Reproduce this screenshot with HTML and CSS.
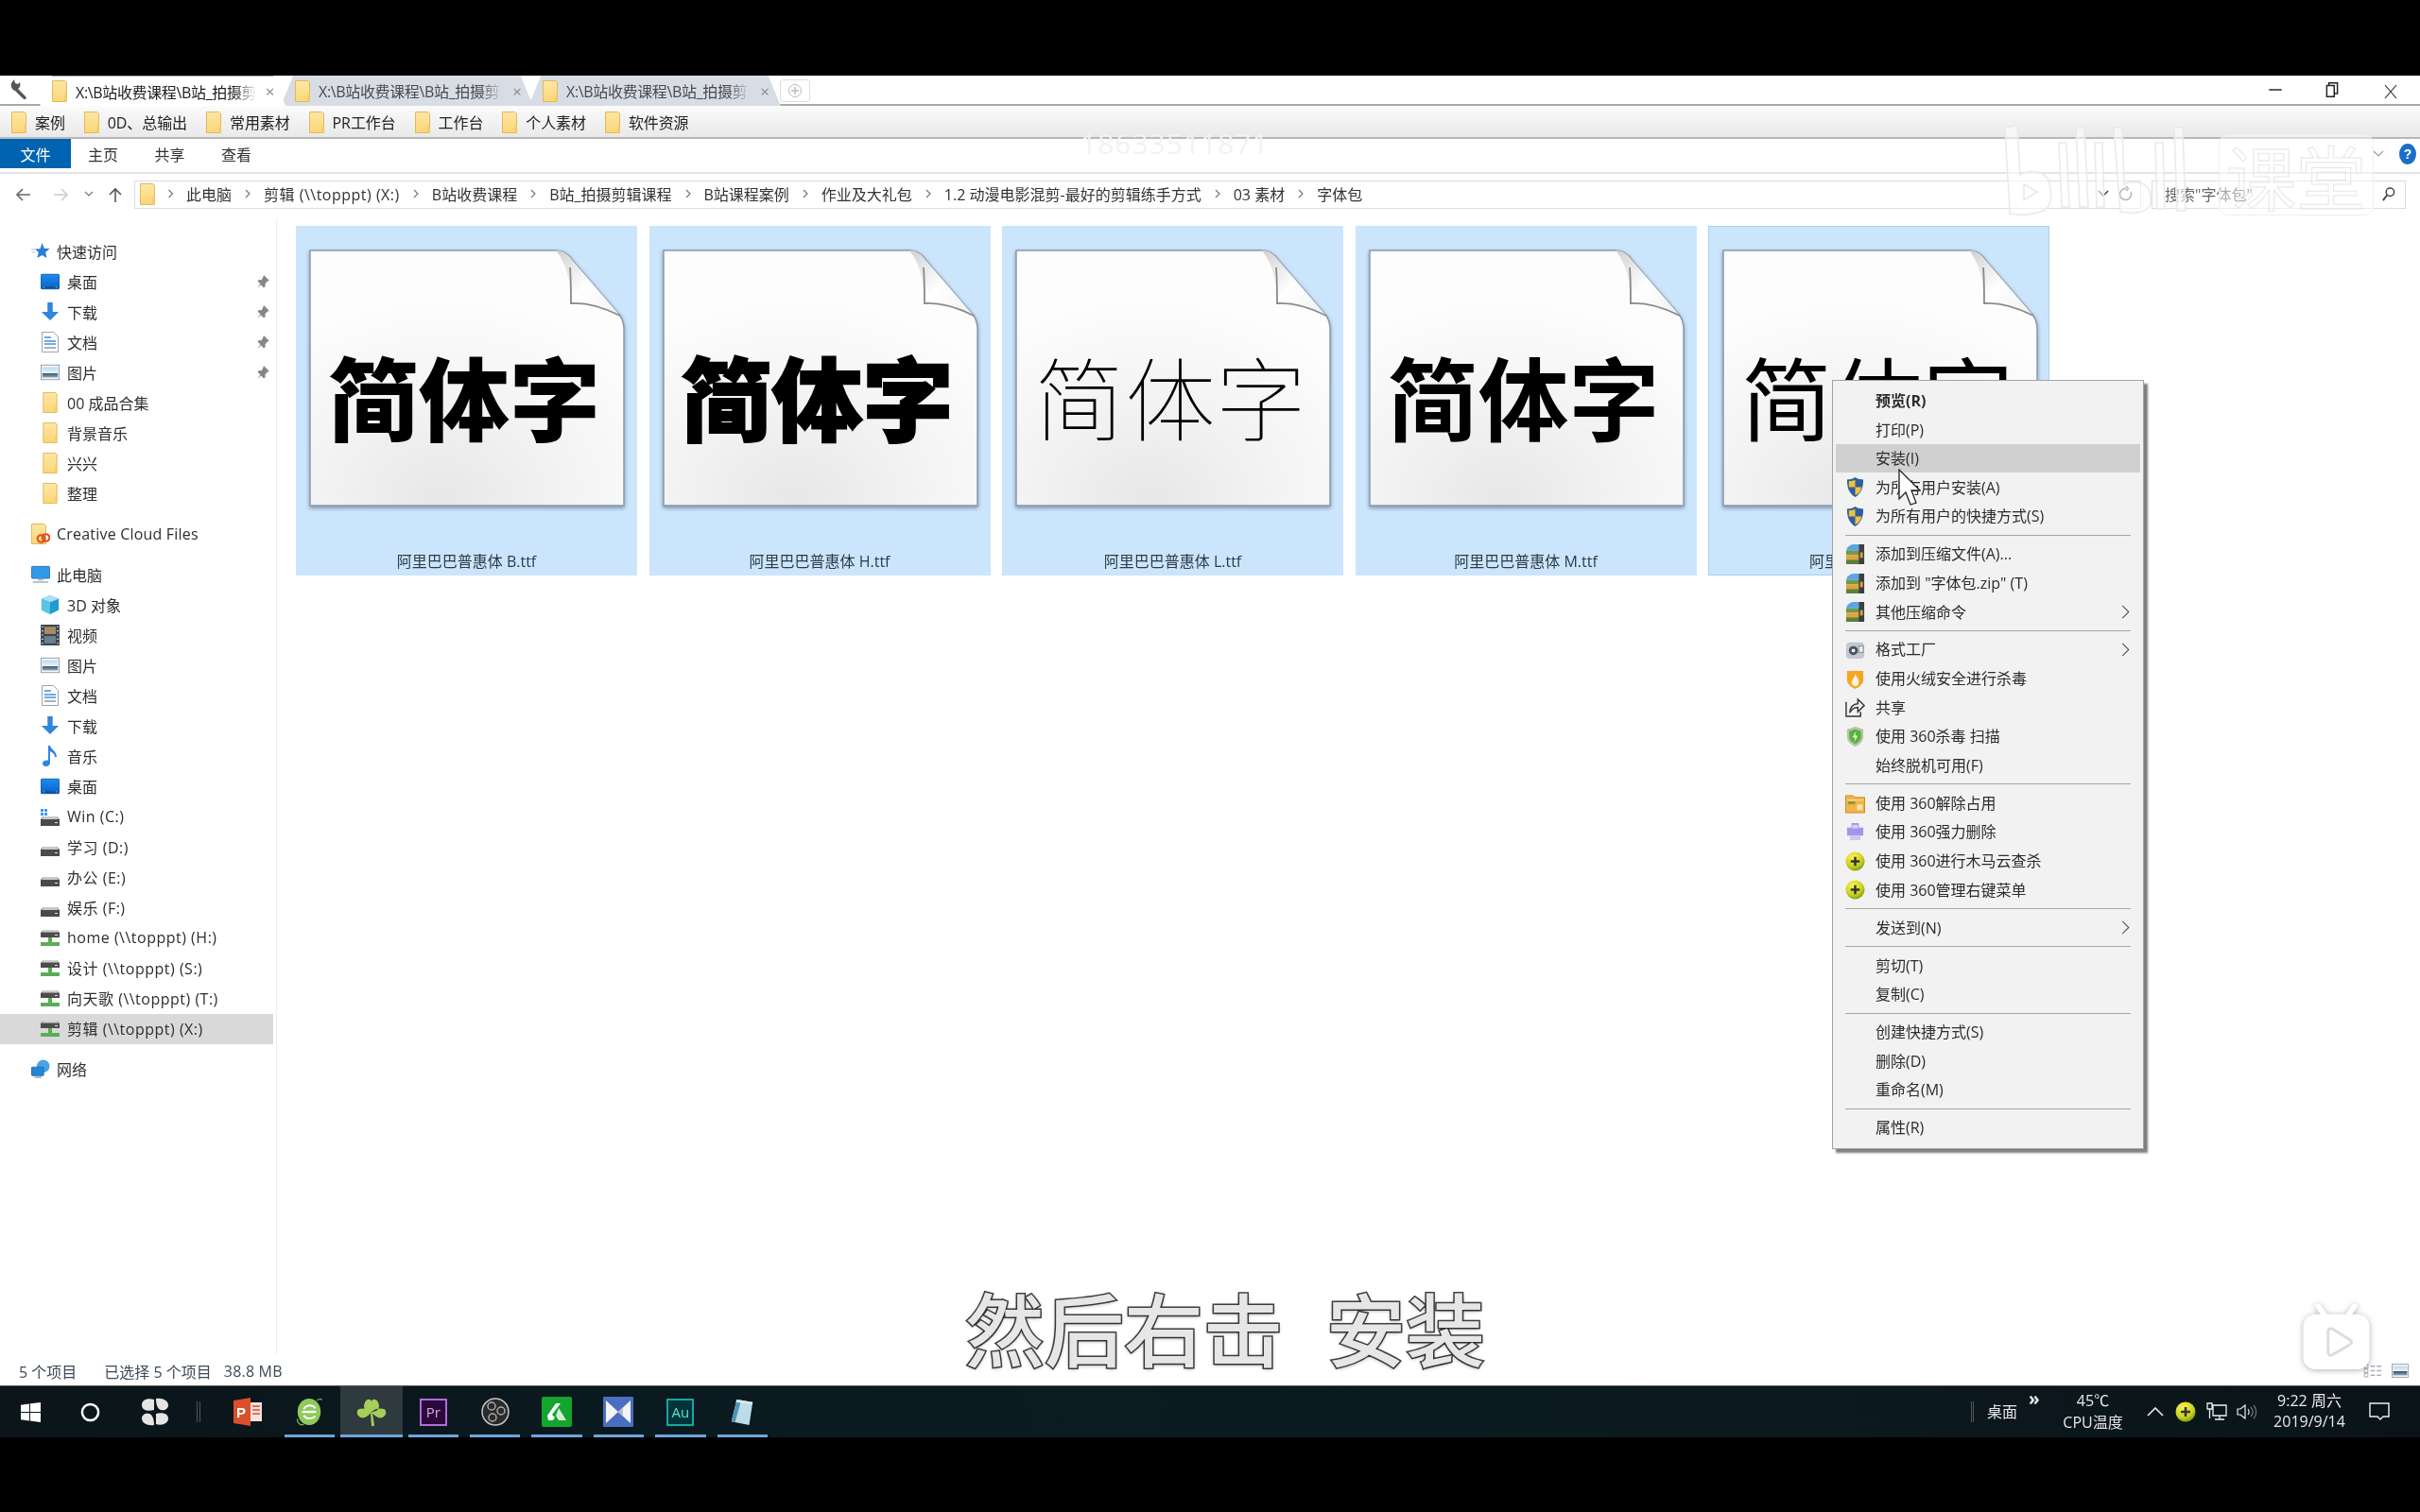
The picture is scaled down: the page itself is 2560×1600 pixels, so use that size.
FILE: index.html
```html
<!DOCTYPE html>
<html lang="zh-CN">
<head>
<meta charset="utf-8">
<title>字体包</title>
<link rel="stylesheet" href="styles.css">
</head>
<body>
<svg class="defs" width="0" height="0" aria-hidden="true">
  <defs>
    <linearGradient id="gFolder" x1="0" y1="0" x2="0" y2="1"><stop offset="0" stop-color="#fde7a6"/><stop offset="1" stop-color="#fbd676"/></linearGradient>
    <linearGradient id="gSky" x1="0" y1="0" x2="0" y2="1"><stop offset="0" stop-color="#bcd9f0"/><stop offset=".55" stop-color="#e8f2fa"/><stop offset=".6" stop-color="#3a5a70"/><stop offset="1" stop-color="#8fa6b5"/></linearGradient>
    <linearGradient id="gBlue" x1="0" y1="0" x2="0" y2="1"><stop offset="0" stop-color="#1c8cf0"/><stop offset="1" stop-color="#0a62c4"/></linearGradient>
    <linearGradient id="gFold" x1="0" y1="0" x2="1" y2="1"><stop offset="0" stop-color="#d0d0d0"/><stop offset=".5" stop-color="#fff"/><stop offset="1" stop-color="#f0f0f0"/></linearGradient>
    <radialGradient id="gPage" cx=".42" cy=".98" r=".8"><stop offset="0" stop-color="#e7e7e7"/><stop offset=".5" stop-color="#f3f3f3"/><stop offset="1" stop-color="#fdfdfd"/></radialGradient>
    <radialGradient id="g360" cx=".4" cy=".3" r=".8"><stop offset="0" stop-color="#fff35a"/><stop offset=".6" stop-color="#c9d21c"/><stop offset="1" stop-color="#5f8d12"/></radialGradient>
    <symbol id="folder" viewBox="0 0 16 23"><path d="M.5.5h13l2 1.500V22.500H.5z" fill="url(#gFolder)" stroke="#e0b95c"/><path d="M13 15h2.500v7.500H13z" fill="#f6cf6b"/></symbol>
    <symbol id="desktop" viewBox="0 0 22 18"><rect x=".5" y=".5" width="21" height="17" rx="1" fill="url(#gBlue)" stroke="#0b5cae"/><path d="M1 15h20v2H1z" fill="#0a4f96"/><path d="M3 15.500h1.500M17.500 15.500H19" stroke="#cfe4f8"/></symbol>
    <symbol id="down" viewBox="0 0 22 22"><path d="M8 0h6v11h7L11 21 1 11h7z" fill="#2f86dc"/></symbol>
    <symbol id="doc" viewBox="0 0 18 22"><path d="M.5.500h12l5 5v16H.5z" fill="#fff" stroke="#9aa6b4"/><path d="M3 6h7M3 10h12M3 13h12" stroke="#3f8fd6" stroke-width="1.500"/><path d="M3 17h12" stroke="#8a97a5" stroke-width="1.500"/></symbol>
    <symbol id="image" viewBox="0 0 22 18"><rect x=".5" y=".5" width="21" height="17" fill="#f4f6f8" stroke="#8c9aaa"/><rect x="2" y="3" width="18" height="12" fill="url(#gSky)"/></symbol>
    <symbol id="pin" viewBox="0 0 14 14"><path d="M8 0l6 6-2 .6-2.500 2.600.2 2.800L8 13.500 5.200 10.500 1 14l3.500-4.500L1.500 6.500 3 5l2.700.2L7.400 2z" fill="#868686"/></symbol>
    <symbol id="star" viewBox="0 0 20 20"><path d="M11.500 1l2.300 5.800 5.700.4-4.400 3.800 1.500 6L11.500 14l-5.200 3 1.500-6-3.800-3.400 5.500-.4z" fill="#2a7fd8"/><path d="M0 8h4M1 11h3" stroke="#9ac7ef"/></symbol>
    <symbol id="cc" viewBox="0 0 20 22"><path d="M.5.500h13l2 2V21.500H.5z" fill="url(#gFolder)" stroke="#e0b95c"/><circle cx="10.500" cy="16" r="3.800" fill="none" stroke="#e34b1e" stroke-width="2"/><circle cx="15.500" cy="15" r="3.800" fill="none" stroke="#e34b1e" stroke-width="2"/></symbol>
    <symbol id="pc" viewBox="0 0 22 20"><rect x=".5" y=".5" width="21" height="14" rx="1" fill="#2f9ae8" stroke="#3d6f9c"/><path d="M8 15h6v2H8zM2 18h18v1.500H2z" fill="#9fb2c4"/></symbol>
    <symbol id="cube" viewBox="0 0 22 22"><path d="M11 0l10 4v13l-10 5-10-5V4z" fill="#1e9bd1"/><path d="M1 4l10 4 10-4-10-4z" fill="#a7e2f3"/><path d="M1 4l10 4v14L1 17z" fill="#5bc4e2"/></symbol>
    <symbol id="film" viewBox="0 0 18 20"><rect width="18" height="20" fill="#3a4552"/><rect x="3.500" y="2" width="11" height="7" fill="#a98b60"/><rect x="3.500" y="11" width="11" height="7" fill="#6e7f8e"/><path d="M1 2h1.500M1 6h1.500M1 10h1.500M1 14h1.500M1 18h1.500M15.500 2H17M15.500 6H17M15.500 10H17M15.500 14H17M15.500 18H17" stroke="#dfe5ea"/></symbol>
    <symbol id="music" viewBox="0 0 16 22"><path d="M6 0h2c1 4 7 6 7 12h-2c0-3-3-5-5-6v12c0 2.500-2 4-4.500 4S0 20.500 0 18.500 2.500 15 6 15.500z" fill="#2f86dc"/></symbol>
    <symbol id="hdd" viewBox="0 -11 20 22"><path d="M3 0h14l3 3v7H0V3z" fill="#4a4a4a"/><path d="M3 0h14l2 3H1z" fill="#c8c8c8"/><path d="M15 6.500h3" stroke="#e8e8e8"/></symbol>
    <symbol id="hddwin" viewBox="0 -11 20 22"><path d="M3 0h14l3 3v7H0V3z" fill="#4a4a4a"/><path d="M3 0h14l2 3H1z" fill="#c8c8c8"/><path d="M15 6.500h3" stroke="#e8e8e8"/><path d="M0-8h3v3H0zM4-8h3v3H4zM0-4h3v3H0zM4-4h3v3H4z" fill="#3b9be6"/></symbol>
    <symbol id="netd" viewBox="0 -3 20 22"><path d="M3 0h14l3 3v5H0V3z" fill="#4d4d4d"/><path d="M3 0h14l2 2.500H1z" fill="#d0d0d0"/><path d="M15 5.500h3" stroke="#e8e8e8"/><path d="M8 8h4v5h8v4H0v-4h8z" fill="#5aad58"/></symbol>
    <symbol id="net" viewBox="0 0 22 22"><circle cx="14" cy="8" r="7.500" fill="#4aa3e6"/><rect x=".5" y="9" width="14" height="10" rx="1" fill="#2486d6" stroke="#1d6eb0"/><path d="M4 21h8" stroke="#8fa6b5" stroke-width="1.500"/></symbol>
    <symbol id="uac" viewBox="0 0 20 22"><path d="M10 0c3 2 6 2.500 9 2.500 0 9-2 15-9 19.500C3 17.500 1 11.500 1 2.500 4 2.500 7 2 10 0z" fill="#2d5f9e"/><path d="M10 3v8h7c-.3 3-1.500 6.500-7 9zM10 11H3.200C3 9 3 7 3 4.500c2.500 0 5-.5 7-1.500z" fill="#f0c23c"/></symbol>
    <symbol id="rar" viewBox="0 0 22 22"><path d="M1 7c1-5 6-7 9-7h5v7z" fill="#5aa6e4"/><rect x="1" y="7" width="20" height="5" fill="#6f9a4c"/><rect x="1" y="12" width="20" height="5" fill="#e5a23b"/><rect x="1" y="17" width="20" height="5" fill="#5f7f3a"/><rect x="15" width="6" height="22" fill="#3d3f43"/><rect x="16.500" y="9" width="3" height="6" fill="#d8a33a"/></symbol>
    <symbol id="ff" viewBox="0 0 22 22"><rect x="1" y="3" width="20" height="18" rx="4" fill="#c2c8d0"/><circle cx="9" cy="12" r="5" fill="#4b5360"/><circle cx="9" cy="12" r="2" fill="#eef1f4"/><rect x="15" y="7" width="5" height="7" fill="#edf0f3" stroke="#7f8894"/></symbol>
    <symbol id="hr" viewBox="0 0 20 22"><path d="M1 2h18v10c0 5-5 8-9 10-4-2-9-5-9-10z" fill="#f5a623"/><path d="M10 5c1 4 4 5 4 9s-2 5-4 5-4-2-4-4c0-3 3-4 4-10z" fill="#fdf3df"/></symbol>
    <symbol id="share" viewBox="0 0 22 22"><path d="M1 5v16h16v-5" fill="none" stroke="#333" stroke-width="1.500"/><path d="M5 17c0-6 4-10 9-10V2l7 7-7 7v-5c-4 0-7 2-9 6z" fill="#f2f2f2" stroke="#333" stroke-width="1.500"/></symbol>
    <symbol id="sh360" viewBox="0 0 20 22"><path d="M1 3 10 0l9 3v8c0 5-4 9-9 11-5-2-9-6-9-11z" fill="#b8c2a8"/><path d="M3.500 5 10 3l6.500 2v6c0 3.500-3 6.500-6.500 8-3.500-1.500-6.500-4.500-6.500-8z" fill="#55b33a"/><path d="M11 5 7 12h3l-1 5 4-7h-3z" fill="#eaf7d4"/></symbol>
    <symbol id="unlock" viewBox="0 0 22 22"><path d="M.5 2h8l2 2h11v17H.5z" fill="#f2b347" stroke="#c98a25"/><path d="M2 7h18" stroke="#fde4ae"/><path d="M3 10h8" stroke="#8b9a3c" stroke-width="3"/><rect x="13" y="12" width="6" height="6" fill="#fde4ae"/></symbol>
    <symbol id="force" viewBox="0 0 22 22"><path d="M7 1h8v5h5v9H2V6h5z" fill="#a694ec"/><rect x="5" y="15" width="12" height="5" fill="#cfc6f7"/><rect x="8" y="3" width="6" height="4" fill="#d7cff9"/></symbol>
    <symbol id="s360" viewBox="0 0 22 22"><circle cx="11" cy="11" r="10.500" fill="url(#g360)"/><path d="M11 6v10M6 11h10" stroke="#333" stroke-width="2.600"/></symbol>
    <symbol id="chev" viewBox="0 0 10 18"><path d="M1 1l8 8-8 8" fill="none" stroke="#555" stroke-width="1.300"/></symbol>
    <symbol id="crumb" viewBox="0 0 6 10"><path d="M1 1l4 4-4 4" fill="none" stroke="#777" stroke-width="1.200"/></symbol>
    <symbol id="page" viewBox="0 0 336 276">
      <path d="M2 2H262c8 0 13 3 18 11l50 58c3 5 4 8 4 14V272H2z" fill="url(#gPage)" stroke="#8d99a8" stroke-width="1.500"/>
      <path d="M262 2c6 0 12 3 17 10l51 59c-16-8-38-14-52-13-1-18-2-38-16-56z" fill="url(#gFold)"/>
      <path d="M277 20c1 14 1 26 1 38 16-1 36 5 52 13" fill="none" stroke="#8a8a8a" stroke-width="1.800"/>
    </symbol>
  </defs>
</svg>

<div class="screen">
  <div class="window">
    <header class="tabbar">
      <svg class="wrench" viewBox="0 0 18 22"><path d="M1 5l3-4 1 4 3 1 2-2c1 3 0 6-2 7l8 8c1 1 1 3 0 3s-2 0-3-1L5 13C2 12 0 9 1 5z" fill="#555"/></svg>
      <div class="tab tab-on"><svg class="fld"><use href="#folder"/></svg><span class="tab-text">X:\B站收费课程\B站_拍摄剪</span><span class="tab-x">×</span></div>
      <div class="tab"><svg class="fld"><use href="#folder"/></svg><span class="tab-text">X:\B站收费课程\B站_拍摄剪</span><span class="tab-x">×</span></div>
      <div class="tab"><svg class="fld"><use href="#folder"/></svg><span class="tab-text">X:\B站收费课程\B站_拍摄剪</span><span class="tab-x">×</span></div>
      <div class="newtab"><svg viewBox="0 0 16 16"><circle cx="8" cy="8" r="6.500" fill="none" stroke="#bbb"/><path d="M8 4v8M4 8h8" stroke="#bbb" stroke-width="1.500"/></svg></div>
      <div class="winctl">
        <svg class="ctl" viewBox="0 0 16 16"><path d="M2 8h12" stroke="#222" stroke-width="1.300"/></svg>
        <svg class="ctl" viewBox="0 0 16 16"><path d="M5 4V1.500h8v10h-3M3 4h7v10.500H3z" fill="none" stroke="#222" stroke-width="1.300"/></svg>
        <svg class="ctl ctl-x" viewBox="0 0 16 16"><path d="M2 1l12 14M14 1L2 15" stroke="#222" stroke-width="1.100"/></svg>
      </div>
    </header>

    <nav class="bookmarks">
      <a class="bm"><svg class="fld"><use href="#folder"/></svg>案例</a>
      <a class="bm"><svg class="fld"><use href="#folder"/></svg>0D、总输出</a>
      <a class="bm"><svg class="fld"><use href="#folder"/></svg>常用素材</a>
      <a class="bm"><svg class="fld"><use href="#folder"/></svg>PR工作台</a>
      <a class="bm"><svg class="fld"><use href="#folder"/></svg>工作台</a>
      <a class="bm"><svg class="fld"><use href="#folder"/></svg>个人素材</a>
      <a class="bm"><svg class="fld"><use href="#folder"/></svg>软件资源</a>
    </nav>

    <div class="ribbon">
      <span class="rib-file">文件</span>
      <span class="rib-tab">主页</span>
      <span class="rib-tab">共享</span>
      <span class="rib-tab">查看</span>
      <svg class="rib-chev" viewBox="0 0 12 8"><path d="M1 1l5 5 5-5" fill="none" stroke="#999" stroke-width="1.200"/></svg>
      <span class="rib-help">?</span>
    </div>

    <div class="addr-row">
      <svg class="nav nav-back" viewBox="0 0 18 18"><path d="M17 9H3M9 3L3 9l6 6" fill="none" stroke="#666" stroke-width="1.600"/></svg>
      <svg class="nav nav-fwd" viewBox="0 0 18 18"><path d="M1 9h14M9 3l6 6-6 6" fill="none" stroke="#ccc" stroke-width="1.600"/></svg>
      <svg class="nav nav-drop" viewBox="0 0 10 8"><path d="M1 1l4 4 4-4" fill="none" stroke="#777" stroke-width="1.200"/></svg>
      <svg class="nav nav-up" viewBox="0 0 18 18"><path d="M9 17V3M3 9l6-6 6 6" fill="none" stroke="#555" stroke-width="1.600"/></svg>
      <div class="addr">
        <svg class="fld"><use href="#folder"/></svg>
        <svg class="crumb-sep first"><use href="#crumb"/></svg>
        <span>此电脑</span><svg class="crumb-sep"><use href="#crumb"/></svg>
        <span class="spaced">剪辑 (\\topppt) (X:)</span><svg class="crumb-sep"><use href="#crumb"/></svg>
        <span>B站收费课程</span><svg class="crumb-sep"><use href="#crumb"/></svg>
        <span>B站_拍摄剪辑课程</span><svg class="crumb-sep"><use href="#crumb"/></svg>
        <span>B站课程案例</span><svg class="crumb-sep"><use href="#crumb"/></svg>
        <span>作业及大礼包</span><svg class="crumb-sep"><use href="#crumb"/></svg>
        <span>1.2 动漫电影混剪-最好的剪辑练手方式</span><svg class="crumb-sep"><use href="#crumb"/></svg>
        <span>03 素材</span><svg class="crumb-sep"><use href="#crumb"/></svg>
        <span>字体包</span>
        <svg class="addr-drop" viewBox="0 0 12 8"><path d="M1 1l5 5 5-5" fill="none" stroke="#444" stroke-width="1.600"/></svg>
        <svg class="addr-ref" viewBox="0 0 16 18"><path d="M13 7a6 6 0 1 1-5-3.500M8 1l2.500 2.500L8 6" fill="none" stroke="#555" stroke-width="1.400"/></svg>
      </div>
      <div class="search">
        <span>搜索"字体包"</span>
        <svg class="search-ico" viewBox="0 0 16 18"><circle cx="10" cy="6.500" r="4.500" fill="none" stroke="#444" stroke-width="1.600"/><path d="M6.500 10L2 16" stroke="#444" stroke-width="2"/></svg>
      </div>
    </div>

    <main class="main">
      <aside class="side">
        <div class="row head"><svg class="ic"><use href="#star"/></svg>快速访问</div>
        <div class="row"><svg class="ic"><use href="#desktop"/></svg>桌面<svg class="pin"><use href="#pin"/></svg></div>
        <div class="row"><svg class="ic"><use href="#down"/></svg>下载<svg class="pin"><use href="#pin"/></svg></div>
        <div class="row"><svg class="ic"><use href="#doc"/></svg>文档<svg class="pin"><use href="#pin"/></svg></div>
        <div class="row"><svg class="ic"><use href="#image"/></svg>图片<svg class="pin"><use href="#pin"/></svg></div>
        <div class="row"><svg class="ic"><use href="#folder"/></svg>00 成品合集</div>
        <div class="row"><svg class="ic"><use href="#folder"/></svg>背景音乐</div>
        <div class="row"><svg class="ic"><use href="#folder"/></svg>兴兴</div>
        <div class="row"><svg class="ic"><use href="#folder"/></svg>整理</div>
        <div class="row head gap"><svg class="ic"><use href="#cc"/></svg><span class="latin">Creative Cloud Files</span></div>
        <div class="row head gap"><svg class="ic"><use href="#pc"/></svg>此电脑</div>
        <div class="row"><svg class="ic"><use href="#cube"/></svg>3D 对象</div>
        <div class="row"><svg class="ic"><use href="#film"/></svg>视频</div>
        <div class="row"><svg class="ic"><use href="#image"/></svg>图片</div>
        <div class="row"><svg class="ic"><use href="#doc"/></svg>文档</div>
        <div class="row"><svg class="ic"><use href="#down"/></svg>下载</div>
        <div class="row"><svg class="ic"><use href="#music"/></svg>音乐</div>
        <div class="row"><svg class="ic"><use href="#desktop"/></svg>桌面</div>
        <div class="row"><svg class="ic"><use href="#hddwin"/></svg><span class="spaced">Win (C:)</span></div>
        <div class="row"><svg class="ic"><use href="#hdd"/></svg><span class="spaced">学习 (D:)</span></div>
        <div class="row"><svg class="ic"><use href="#hdd"/></svg><span class="spaced">办公 (E:)</span></div>
        <div class="row"><svg class="ic"><use href="#hdd"/></svg><span class="spaced">娱乐 (F:)</span></div>
        <div class="row"><svg class="ic"><use href="#netd"/></svg><span class="spaced">home (\\topppt) (H:)</span></div>
        <div class="row"><svg class="ic"><use href="#netd"/></svg><span class="spaced">设计 (\\topppt) (S:)</span></div>
        <div class="row"><svg class="ic"><use href="#netd"/></svg><span class="spaced">向天歌 (\\topppt) (T:)</span></div>
        <div class="row sel"><svg class="ic"><use href="#netd"/></svg><span class="spaced">剪辑 (\\topppt) (X:)</span></div>
        <div class="row head gap"><svg class="ic"><use href="#net"/></svg>网络</div>
      </aside>
      <section class="files">
        <figure class="tile">
          <div class="thumb"><svg class="page"><use href="#page"/></svg><span class="glyphs g-b">简体字</span></div>
          <figcaption>阿里巴巴普惠体 B.ttf</figcaption>
        </figure>
        <figure class="tile">
          <div class="thumb"><svg class="page"><use href="#page"/></svg><span class="glyphs g-h">简体字</span></div>
          <figcaption>阿里巴巴普惠体 H.ttf</figcaption>
        </figure>
        <figure class="tile">
          <div class="thumb"><svg class="page"><use href="#page"/></svg><span class="glyphs g-l">简体字</span></div>
          <figcaption>阿里巴巴普惠体 L.ttf</figcaption>
        </figure>
        <figure class="tile">
          <div class="thumb"><svg class="page"><use href="#page"/></svg><span class="glyphs g-m">简体字</span></div>
          <figcaption>阿里巴巴普惠体 M.ttf</figcaption>
        </figure>
        <figure class="tile tile-focus">
          <div class="thumb"><svg class="page"><use href="#page"/></svg><span class="glyphs g-r">简体字</span></div>
          <figcaption>阿里巴巴普惠体 R.ttf</figcaption>
        </figure>
      </section>
    </main>

    <footer class="status">
      <span class="st-count">5 个项目</span>
      <span class="st-sel">已选择 5 个项目</span>
      <span class="st-size">38.8 MB</span>
      <svg class="view" viewBox="0 0 22 16"><path d="M1 1h4v4H1zM1 6h4v4H1zM1 11h4v4H1z" fill="none" stroke="#9aa"/><path d="M8 3h5M15 3h5M8 8h5M15 8h5M8 13h5M15 13h5" stroke="#aab" stroke-width="1.500"/></svg>
      <svg class="view view-img"><use href="#image"/></svg>
    </footer>

    <!-- overlays -->
    <div class="wm-num">18633511871</div>
    <svg class="wm-bili" viewBox="0 0 205 95">
      <path d="M1 2l13-2 3 52c10-6 26-4 30 6 4 12 4 26-4 31-10 6-27 6-37 4zM21 62l14 8-14 9z" fill="rgba(255,255,255,.55)" stroke="#e9e9e9" stroke-width="1.500"/>
      <path d="M58 18h8l3 68h-8zM76 2h9l4 84h-9zM96 18h8l2 68h-8zM116 2h9l2 60c8-4 22-3 26 5 4 10 3 18-3 22-8 4-18 4-27 2zM160 18h8l2 70h-8zM180 2h9l3 88h-9z" fill="rgba(255,255,255,.55)" stroke="#e9e9e9" stroke-width="1.500"/>
    </svg>
    <div class="wm-box">课堂</div>

    <div class="menu">
      <div class="mi mi-bold">预览(R)</div>
      <div class="mi">打印(P)</div>
      <div class="mi mi-hover">安装(I)</div>
      <div class="mi"><svg class="mic"><use href="#uac"/></svg>为所有用户安装(A)</div>
      <div class="mi"><svg class="mic"><use href="#uac"/></svg>为所有用户的快捷方式(S)</div>
      <hr class="msep">
      <div class="mi"><svg class="mic"><use href="#rar"/></svg>添加到压缩文件(A)...</div>
      <div class="mi"><svg class="mic"><use href="#rar"/></svg>添加到 "字体包.zip" (T)</div>
      <div class="mi"><svg class="mic"><use href="#rar"/></svg>其他压缩命令<svg class="msub"><use href="#chev"/></svg></div>
      <hr class="msep">
      <div class="mi"><svg class="mic"><use href="#ff"/></svg>格式工厂<svg class="msub"><use href="#chev"/></svg></div>
      <div class="mi"><svg class="mic"><use href="#hr"/></svg>使用火绒安全进行杀毒</div>
      <div class="mi"><svg class="mic"><use href="#share"/></svg>共享</div>
      <div class="mi"><svg class="mic"><use href="#sh360"/></svg>使用 360杀毒 扫描</div>
      <div class="mi">始终脱机可用(F)</div>
      <hr class="msep">
      <div class="mi"><svg class="mic"><use href="#unlock"/></svg>使用 360解除占用</div>
      <div class="mi"><svg class="mic"><use href="#force"/></svg>使用 360强力删除</div>
      <div class="mi"><svg class="mic"><use href="#s360"/></svg>使用 360进行木马云查杀</div>
      <div class="mi"><svg class="mic"><use href="#s360"/></svg>使用 360管理右键菜单</div>
      <hr class="msep">
      <div class="mi">发送到(N)<svg class="msub"><use href="#chev"/></svg></div>
      <hr class="msep">
      <div class="mi">剪切(T)</div>
      <div class="mi">复制(C)</div>
      <hr class="msep">
      <div class="mi">创建快捷方式(S)</div>
      <div class="mi">删除(D)</div>
      <div class="mi">重命名(M)</div>
      <hr class="msep">
      <div class="mi">属性(R)</div>
    </div>
    <svg class="cursor" viewBox="0 0 24 40"><path d="M1 1v31l7-7 5 13 6-2-5-13h9z" fill="#fff" stroke="#222" stroke-width="1.300"/></svg>

    <div class="subtitle"><span>然后右击</span><span>安装</span></div>
    <svg class="tvlogo" viewBox="0 0 74 72"><path d="M24 12 17 2M50 12l7-10" stroke="#fff" stroke-width="6" stroke-linecap="round"/><rect x="1" y="11" width="72" height="60" rx="13" fill="#fff"/><path d="M28 30c0-3 2-4 5-3l19 12c2 1 2 4 0 5L33 55c-3 2-5 0-5-3z" fill="none" stroke="#dcdcdc" stroke-width="3"/></svg>
  </div>

  <div class="taskbar">
    <div class="tb-cell c-win"><svg class="t-win" viewBox="0 0 22 22"><path d="M0 3l9.500-1.500V10.500H0zM10.500 1.300 22 0v10.500H10.500zM0 11.500h9.500v9L0 19zM10.500 11.500H22V22l-11.500-1.500z" fill="#fff"/></svg></div>
    <div class="tb-cell c-cor"><svg class="t-ico20" viewBox="0 0 22 22"><circle cx="11" cy="11" r="9" fill="none" stroke="#fff" stroke-width="2.600"/></svg></div>
    <div class="tb-cell c-swirl"><svg class="t-ico30" viewBox="0 0 30 30"><path d="M14 2C6 0 1 3 1 8s6 7 13 5zM16 1c7-1 13 2 13 7 0 4-4 6-8 5-3-1-5-5-5-12zM14 29c-7 1-13-2-13-7 0-4 4-6 8-5 3 1 5 5 5 12zM16 28c7 2 13-1 13-6s-6-7-13-5z" fill="#e4e4e4"/></svg></div>
    <div class="tb-sep"></div>
    <div class="tb-cell app"><svg class="t-ico30" viewBox="0 0 30 30"><path d="M0 3l18-3v30L0 27z" fill="#d9502b"/><rect x="18" y="5" width="12" height="20" fill="#f3e3dc"/><path d="M20 9h8M20 13h8M20 17h8" stroke="#d9502b" stroke-width="1.500"/><text x="3" y="21" class="t-p">P</text></svg></div>
    <div class="tb-cell app run"><svg class="t-ico30" viewBox="0 0 30 32"><ellipse cx="15" cy="16" rx="13" ry="15" fill="#8fca5a"/><path d="M7 16h16" stroke="#fff" stroke-width="2.500"/><path d="M22 12c-2-4-10-5-13 1M9 20c2 4 9 5 13 1" fill="none" stroke="#fff" stroke-width="2"/><path d="M2 24C1 28 5 32 9 30M24 3c3-2 5-2 5 0" fill="none" stroke="#6db33f" stroke-width="1.500"/></svg></div>
    <div class="tb-cell app active run"><svg class="t-ico32" viewBox="0 0 32 32"><path d="M16 16C10 16 6 12 9 6c2-4 6-4 7-1 1-3 5-3 7 1 3 6-1 10-7 10zM16 16c-4 6-10 8-13 5-3-2-3-7 0-8 3-1 9-1 13 3zM16 16c4 6 10 8 13 5 3-2 3-7 0-8-3-1-9-1-13 3zM15 17h2l2 14h-3z" fill="#a6cf5a"/></svg></div>
    <div class="tb-cell app run"><div class="t-box t-pr">Pr</div></div>
    <div class="tb-cell app run"><svg class="t-ico30" viewBox="0 0 30 30"><circle cx="15" cy="15" r="14" fill="#2b2a2d" stroke="#c4c4c4" stroke-width="1.500"/><circle cx="11" cy="9" r="4" fill="none" stroke="#aaa" stroke-width="1.500"/><circle cx="21" cy="14" r="4" fill="none" stroke="#aaa" stroke-width="1.500"/><circle cx="12" cy="21" r="4" fill="none" stroke="#aaa" stroke-width="1.500"/></svg></div>
    <div class="tb-cell app run"><svg class="t-ico32" viewBox="0 0 32 32"><rect width="32" height="32" rx="2" fill="#14a52e"/><path d="M15 7h5l-9 12 3 3-2 3H7l-1-5z" fill="#fff"/><path d="M18 12l8 13h-8l-3-5z" fill="#d5efd9"/></svg></div>
    <div class="tb-cell app run"><svg class="t-ico32" viewBox="0 0 32 32"><rect width="32" height="32" rx="1" fill="#4a6fc0"/><path d="M3 4l13 12L3 28zM29 4 16 16l13 12z" fill="#f4f4f4"/><path d="M21 11l-5 5 5 5z" fill="#b8c0d0"/></svg></div>
    <div class="tb-cell app run"><div class="t-box t-au">Au</div></div>
    <div class="tb-cell app run"><svg class="t-ico30" viewBox="0 0 30 32"><path d="M9 2l18 3-4 26L3 27z" fill="#bcdce8"/><path d="M3 27 9 2l5 1-7 25z" fill="#4d94b5"/><path d="M9 2l18 3-.6 3L8 5z" fill="#dfe7ea"/></svg></div>

    <div class="tray">
      <div class="tr-desk"><span>桌面</span><span class="tr-more">»</span></div>
      <div class="tr-temp"><span>45℃</span><span>CPU温度</span></div>
      <svg class="tr-i tr-caret" viewBox="0 0 18 10"><path d="M1 9l8-8 8 8" fill="none" stroke="#eee" stroke-width="1.600"/></svg>
      <svg class="tr-i tr-360"><use href="#s360"/></svg>
      <svg class="tr-i tr-net" viewBox="0 0 22 20"><path d="M7 3h14v11H7zM14 14v4M9 18h10M1 1h5v6H1zM3.500 7v10" fill="none" stroke="#eee" stroke-width="1.300"/></svg>
      <svg class="tr-i tr-vol" viewBox="0 0 22 18"><path d="M1 6h3l5-4v14l-5-4H1zM12 6c1.500 2 1.500 4 0 6" fill="none" stroke="#eee" stroke-width="1.200"/><path d="M15 4c2.500 3 2.500 7 0 10M18 2c3.500 4 3.500 10 0 14" fill="none" stroke="#777" stroke-width="1.200"/></svg>
      <div class="tr-clock"><span>9:22 周六</span><span>2019/9/14</span></div>
      <svg class="tr-i tr-note" viewBox="0 0 22 20"><path d="M1 1h20v14h-6l-3 3-3-3H1z" fill="none" stroke="#eee" stroke-width="1.400"/></svg>
    </div>
  </div>
</div>
</body>
</html>
```

FILE: styles.css
```css
* { box-sizing: border-box; }
html, body { margin: 0; padding: 0; background: #000; }
.defs { position: absolute; }
.screen {
  width: 2560px; height: 1600px; background: #000; padding-top: 80px;
  display: flex; flex-direction: column; overflow: hidden;
  font-family: "Open Sans", "Noto Sans CJK SC", sans-serif;
  font-size: 16px; color: #333; filter: blur(.6px);
}
.window {
  position: relative; height: 1386px; background: #fff;
  display: flex; flex-direction: column; flex: none;
}
.fld { width: 16px; height: 23px; flex: none; }
.spaced { letter-spacing: .5px; }

/* tabs */
.tabbar { height: 32px; flex: none; display: flex; align-items: flex-end; border-bottom: 2px solid #a9a9a9; background: #fff; position: relative; }
.wrench { width: 18px; height: 22px; margin: 0 0 5px 11px; align-self: flex-end; flex: none; }
.tab {
  width: 267px; height: 32px; margin: 0 -5px -2px 0; padding: 0 11px 0 15px;
  display: flex; align-items: center; gap: 9px; flex: none;
  background: #d8dde5; clip-path: polygon(0 100%, 5% 0, 95% 0, 100% 100%);
  color: #4a4a4a; font-size: 16px;
}
.tab-on { width: 260px; margin-left: 13px; background: #fff; color: #222; z-index: 2; padding-left: 13px; border-top: 1px solid #aaa; }
.tab-text { flex: 1; white-space: nowrap; letter-spacing: -.35px; -webkit-mask-image: linear-gradient(90deg, #000 88%, transparent); mask-image: linear-gradient(90deg, #000 88%, transparent); }
.tab-x { color: #888; font-size: 17px; width: 12px; text-align: center; }
.newtab { width: 32px; height: 24px; margin: 0 0 2px 4px; border: 1px solid #ddd; border-radius: 3px; display: flex; align-items: center; justify-content: center; }
.newtab svg { width: 16px; height: 16px; }
.winctl { margin-left: auto; align-self: center; display: flex; gap: 42px; padding-right: 23px; margin-top: 4px; }
.ctl { width: 18px; height: 20px; }
.ctl-x { width: 16px; height: 24px; margin-left: 3px; }

/* bookmarks */
.bookmarks { height: 35px; flex: none; display: flex; align-items: center; padding: 1px 0 0 12px; border-bottom: 2px solid #b8b8b8; background: linear-gradient(#fbfbfb, #e9e9e9); color: #222; }
.bm { display: flex; align-items: center; gap: 9px; margin-right: 20px; letter-spacing: -.1px; white-space: nowrap; }

/* ribbon */
.ribbon { height: 37px; flex: none; display: flex; align-items: center; border-bottom: 2px solid #e5e5e5; padding-bottom: 3px; }
.rib-file { width: 75px; height: 31px; margin-bottom: -3px; align-self: flex-start; background: #0063b1; color: #fff; display: flex; align-items: center; justify-content: center; }
.rib-tab { margin-left: 38.500px; color: #333; }
.rib-file + .rib-tab { margin-left: 18px; }
.rib-chev { width: 12px; height: 8px; margin-left: auto; }
.rib-help { width: 18px; height: 22px; margin: 0 4px 0 16px; border-radius: 50%; background: #1b6fc4; color: #fff; font: bold 14px/22px "Liberation Sans", sans-serif; text-align: center; }

/* address */
.addr-row { height: 48px; flex: none; display: flex; align-items: flex-start; padding-top: 7px; position: relative; }
.nav { flex: none; margin-top: 6px; width: 18px; height: 18px; }
.nav-back { margin-left: 15px; }
.nav-fwd { margin-left: 23px; }
.nav-drop { width: 10px; height: 8px; margin: 11px 0 0 15px; }
.nav-up { margin-left: 14px; }
.addr { width: 2123px; height: 30px; margin-left: 11px; border: 1px solid #dcdcdc; display: flex; align-items: center; padding: 0 0 2px 5px; flex: none; white-space: nowrap; }
.crumb-sep { width: 34px; height: 10px; flex: none; }
.crumb-sep.first { width: 33px; }
.addr-drop { width: 12px; height: 8px; margin-left: auto; }
.addr-ref { width: 16px; height: 18px; margin: 0 7px 0 10px; }
.search { width: 269px; height: 30px; margin-left: 11px; border: 1px solid #dcdcdc; display: flex; align-items: center; justify-content: space-between; padding: 0 10px 2px 13px; color: #666; flex: none; }
.search-ico { width: 15px; height: 17px; }

/* main */
.main { flex: 1; min-height: 0; display: flex; }
.side { width: 293px; flex: none; padding-top: 19px; border-right: 1px solid #eee; }
.row { height: 32px; display: flex; align-items: center; padding: 0 0 2px 43px; gap: 8px; white-space: nowrap; color: #2e2e2e; }
.ic { width: 20px; height: 22px; flex: none; }
.row.head { padding-left: 33px; gap: 7px; }
.row.gap { margin-top: 11px; }
.row.sel { background: #d9d9d9; width: 289px; }
.row .pin { width: 14px; height: 14px; margin-left: auto; margin-right: 7px; }
.latin { letter-spacing: .2px; }
.files { flex: 1; display: flex; align-items: flex-start; gap: 12.500px; padding: 7px 0 0 20px; }
.tile { width: 361px; height: 370px; flex: none; margin: 0; background: #cbe5fd; text-align: center; color: #2f3a45; font-size: 16px; padding-top: 24px; }
.tile-focus { border: 1px solid #a9d0f2; padding-top: 23px; }
.thumb { position: relative; width: 336px; height: 276px; margin-left: 13px; }
.page { width: 336px; height: 276px; filter: drop-shadow(0 2px 2px rgba(60, 80, 110, .55)); display: block; }
.glyphs { position: absolute; inset: 0; padding: 33px 6px 0 0; display: flex; align-items: center; justify-content: center; font-size: 96px; line-height: 1; color: #000; font-family: "Noto Sans CJK SC", sans-serif; white-space: nowrap; }
.g-b { font-weight: 900; }
.g-h { font-weight: 900; -webkit-text-stroke: 2px #000; }
.g-l { font-weight: 100; }
.g-m { font-weight: 700; }
.g-r { font-weight: 400; }
figcaption { margin-top: 40px; line-height: 30px; }

/* status */
.status { height: 31px; flex: none; display: flex; align-items: center; padding-left: 20px; color: #3d4857; position: relative; }
.st-sel { margin-left: 29px; }
.st-size { margin-left: 13px; letter-spacing: .2px; }
.view { width: 21px; height: 15px; margin: 0 0 0 auto; }
.view-img { width: 18px; height: 15px; margin: 0 12px 0 9px; }

/* watermark */
.wm-num { position: absolute; left: 1143px; top: 51px; font-size: 30px; color: #f2f2f2; letter-spacing: 1px; }
.wm-bili { position: absolute; left: 2120px; top: 53px; width: 205px; height: 95px; }
.wm-box { position: absolute; left: 2347px; top: 62px; width: 164px; height: 86px; border-radius: 10px; background: rgba(255, 255, 255, .45); border: 1px solid #efefef; font-size: 74px; line-height: 84px; text-align: center; color: transparent; -webkit-text-stroke: 1px #e6e6e6; font-family: "Noto Sans CJK SC", sans-serif; white-space: nowrap; }

/* menu */
.menu { position: absolute; left: 1938px; top: 322px; width: 330px; height: 814px; background: #f2f2f2; border: 1px solid #a3a3a3; box-shadow: 4px 4px 2px rgba(0, 0, 0, .5); padding: 5.700px 3px 0; color: #2c2c2c; }
.mi { height: 30.600px; display: flex; align-items: center; position: relative; padding: 0 0 2px 42px; white-space: nowrap; }
.mi-bold { font-weight: 700; }
.mi-hover { background: #d0d0d0; }
.mic { position: absolute; left: 10px; top: 5px; width: 21px; height: 21px; }
.msub { position: absolute; right: 11px; top: 8px; width: 9px; height: 15px; }
.msep { height: 1px; border: 0; background: #a6a6a6; margin: 4.200px 10px; }
.cursor { position: absolute; left: 2008px; top: 416px; width: 24px; height: 40px; }

/* subtitle */
.subtitle { position: absolute; left: 1021px; top: 1282px; display: flex; gap: 46px; font-size: 84px; line-height: 1; font-weight: 500; font-family: "Noto Sans CJK SC", sans-serif; color: #e6e6e6; -webkit-text-stroke: 3px #444; paint-order: stroke fill; text-shadow: 0 1px 4px rgba(0, 0, 0, .45); white-space: nowrap; filter: blur(.5px); }
.tvlogo { position: absolute; left: 2434px; top: 1300px; width: 75px; height: 70px; filter: drop-shadow(0 1px 3px rgba(0, 0, 0, .3)); }

/* taskbar */
.taskbar { height: 55px; flex: none; display: flex; align-items: center; background: linear-gradient(90deg, #0b151a, #0a1c22 40%, #0c1a1f 70%, #0a1418); border-top: 1px solid #555; color: #e8e8e8; }
.tb-cell { height: 54px; flex: none; display: flex; align-items: center; justify-content: center; position: relative; }
.c-win { width: 64px; }
.c-cor { width: 63px; }
.c-swirl { width: 73px; }
.tb-sep { width: 4px; height: 22px; margin: 0 8px; border-left: 1px solid #555; border-right: 1px solid #555; flex: none; }
.app { width: 65.400px; }
.tb-sep + .app { margin-left: 9.400px; }
.active { background: #2f3a3e; }
.run::after { content: ""; position: absolute; left: 6px; right: 6px; bottom: 0; height: 3px; background: #6ca6de; }
.active::after { left: 0; right: 0; }
.t-win { width: 21px; height: 21px; }
.t-ico20 { width: 21px; height: 21px; }
.t-ico30 { width: 30px; height: 30px; }
.t-ico32 { width: 32px; height: 32px; }
.t-p { font: bold 15px "Liberation Sans", sans-serif; fill: #fff; }
.t-box { width: 29px; height: 29px; border: 2px solid; font: 15px/25px "Open Sans", sans-serif; text-align: center; }
.t-pr { background: #2a0a3a; border-color: #b06cd8; color: #d9a6f2; }
.t-au { background: #003338; border-color: #17a6a0; color: #5fe0d5; }
.tray { margin-left: auto; display: flex; align-items: center; padding-right: 16px; height: 54px; text-align: center; }
.tr-desk { width: 75px; height: 22px; border-left: 3px double #555; display: flex; padding-left: 14px; line-height: 22px; position: relative; }
.tr-more { position: absolute; left: 58px; top: -14px; font-size: 19px; font-weight: 700; }
.tr-temp { width: 108px; display: flex; flex-direction: column; line-height: 23px; }
.tr-i { flex: none; }
.tr-caret { width: 18px; height: 10px; margin: 0 3px; }
.tr-360 { width: 22px; height: 22px; margin: 0 9px; }
.tr-net { width: 22px; height: 20px; margin: 0 2px; }
.tr-vol { width: 22px; height: 18px; margin: 0 8px; }
.tr-clock { width: 94px; display: flex; flex-direction: column; line-height: 22px; white-space: nowrap; align-items: center; margin-top: -2px; }
.tr-note { width: 22px; height: 20px; margin: 0 16px; }
```
